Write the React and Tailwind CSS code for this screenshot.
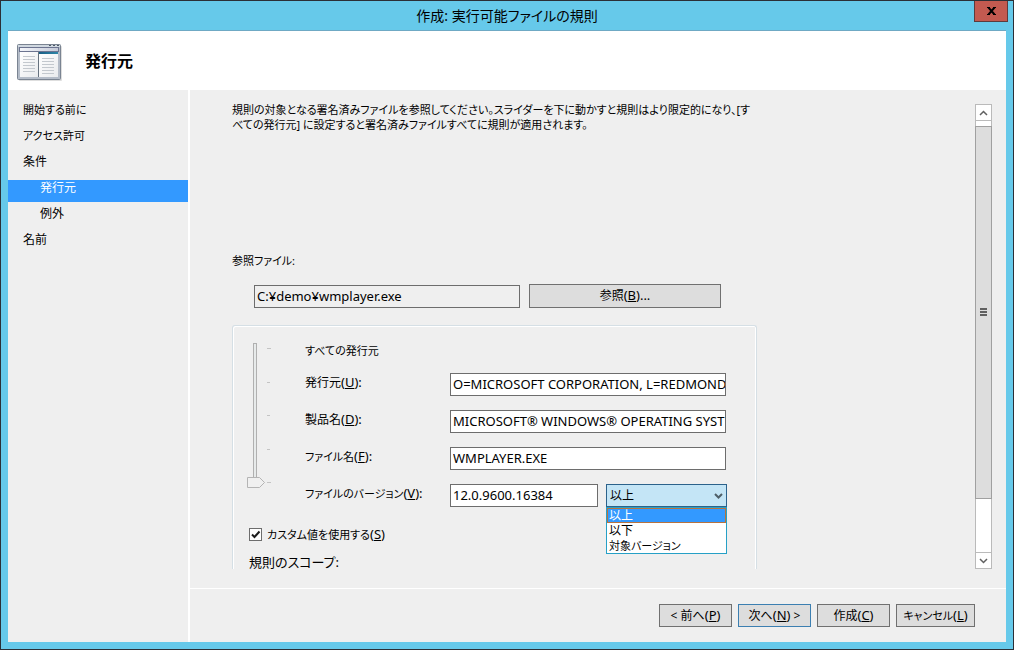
import React, { useState } from "react";

const steps = [
  { label: "開始する前に", compact: true },
  { label: "アクセス許可", compact: true },
  { label: "条件" },
  { label: "発行元", nested: true, current: true },
  { label: "例外", nested: true },
  { label: "名前" },
];

const operators = ["以上", "以下", "対象バージョン"];

const fieldClass =
  "h-[23px] min-w-0 border border-[#6d6d6d] pr-0 pb-[2px] pl-[2px] text-[13px] outline-none";
const buttonClass =
  "h-[23px] border bg-[#dddddd] text-center leading-5 whitespace-nowrap";

function Mnemonic({ letter, suffix = "" }) {
  return (
    <span className="text-[13px]">
      (<u>{letter}</u>){suffix}
    </span>
  );
}

function WizardIcon() {
  return (
    <svg className="mt-[5px]" width="47" height="38" viewBox="0 0 47 38" aria-hidden="true">
      <defs>
        <linearGradient id="titleFade" x1="0" x2="1">
          <stop offset="0" stopColor="#f4f6fb" />
          <stop offset="1" stopColor="#c5cad8" />
        </linearGradient>
        <linearGradient id="pageFade" x1="0" y1="0" x2="1" y2="1">
          <stop offset="0" stopColor="#ffffff" />
          <stop offset="1" stopColor="#e9ebee" />
        </linearGradient>
        <linearGradient id="tealFade" x1="0" x2="1">
          <stop offset="0" stopColor="#1b5f86" />
          <stop offset="1" stopColor="#2d86a8" />
        </linearGradient>
      </defs>
      <rect x="2" y="2" width="43" height="35" rx="1" fill="#dedede" />
      <rect x="0.5" y="0.5" width="43" height="35" rx="1" fill="#b4bcc8" stroke="#7a8492" />
      <rect x="1" y="1" width="42" height="2" fill="#d0d8e0" />
      <path d="M32 1.5h2M36 1.5h2M40 1.5h2" stroke="#4d5866" />
      <rect x="2.5" y="3.5" width="39" height="4" fill="url(#titleFade)" stroke="#6c7490" />
      <rect x="3" y="8" width="18" height="25" fill="url(#pageFade)" />
      <rect x="22" y="8" width="19" height="25" fill="url(#pageFade)" />
      <rect x="21" y="8" width="1" height="25" fill="#66727f" />
      <rect x="22" y="8" width="19" height="2" fill="url(#tealFade)" />
      <path
        d="M6 12.5h12M6 15.5h12M6 18.5h12M6 21.5h12M6 24.5h12M6 27.5h12M25 14.5h12M25 17.5h12M25 20.5h12M25 23.5h12M25 26.5h12M25 29.5h12"
        stroke="#c3c8ce"
      />
    </svg>
  );
}

function PrecisionSlider() {
  const [value, setValue] = useState(0);
  return (
    <div className="relative h-[148px] w-[26px] shrink-0">
      <svg width="26" height="148" viewBox="0 0 26 148" aria-hidden="true">
        <rect x="6.5" y="0.5" width="3" height="143" fill="#e7eaea" stroke="#b0b0b0" />
        <path d="M20 5.5h4M20 39.5h3M20 72.5h3M20 106.5h3M20 139.5h4" stroke="#c4c4c4" />
        <path d="M0.5 134.5h12l5 5l-5 5h-12z" fill="#f0f0f0" stroke="#b4b4b4" />
      </svg>
      <input
        type="range"
        aria-label="規則の範囲"
        min="0"
        max="4"
        value={value}
        onChange={(e) => setValue(Number(e.target.value))}
        className="absolute inset-0 h-full w-full opacity-0 [direction:rtl] [writing-mode:vertical-lr]"
      />
    </div>
  );
}

function ScrollBar() {
  return (
    <div className="mt-[14px] flex w-[17px] shrink-0 flex-col border border-[#bababa] bg-white">
      <button type="button" aria-label="上へスクロール" className="flex h-4 items-center justify-center border-b border-[#bababa]">
        <svg width="9" height="6" viewBox="0 0 9 6" aria-hidden="true">
          <path d="M1 5l3.500-3.500L8 5" fill="none" stroke="#606060" strokeWidth="1.500" />
        </svg>
      </button>
      <div className="flex min-h-0 flex-1 flex-col pt-[5px] pb-[53px]">
        <div className="-mx-px flex flex-1 items-center justify-center border border-[#a0a0a0] bg-[#dddddd]">
          <svg width="7" height="10" viewBox="0 0 7 10" aria-hidden="true">
            <path d="M0 1h7M0 4h7M0 7h7" stroke="#606060" strokeWidth="2" />
          </svg>
        </div>
      </div>
      <button type="button" aria-label="下へスクロール" className="flex h-4 items-center justify-center border-t border-[#bababa]">
        <svg width="9" height="6" viewBox="0 0 9 6" aria-hidden="true">
          <path d="M1 1l3.500 3.500L8 1" fill="none" stroke="#606060" strokeWidth="1.500" />
        </svg>
      </button>
    </div>
  );
}

function TextRow({ id, label, mnemonic, value, compact, children }) {
  return (
    <div className="flex h-[37px] items-start">
      <label
        htmlFor={id}
        className={`w-[145px] shrink-0 leading-[18px] ${compact ? "text-[11px]" : ""}`}
      >
        {label}
        <Mnemonic letter={mnemonic} suffix=":" />
      </label>
      <input
        id={id}
        type="text"
        defaultValue={value}
        className={`${fieldClass} bg-white ${children ? "w-[148px]" : "w-[276px]"}`}
      />
      {children}
    </div>
  );
}

function OperatorSelect() {
  return (
    <div className="relative ml-2 w-[121px]">
      <select
        aria-label="バージョンの条件"
        defaultValue="以上"
        className="block h-[23px] w-full appearance-none border border-[#2c628b] bg-[#c4e5f6] px-[3px] outline-none"
      >
        {operators.map((o) => (
          <option key={o}>{o}</option>
        ))}
      </select>
      <svg className="pointer-events-none absolute top-[9px] right-[4px]" width="9" height="7" viewBox="0 0 9 7" aria-hidden="true">
        <path d="M1 1l3.500 3.500L8 1" fill="none" stroke="#4f5f68" strokeWidth="2" />
      </svg>
      <ul className="absolute top-full left-0 w-full border border-[#26a0c6] bg-white">
        {operators.map((o, i) => (
          <li
            key={o}
            className={`flex h-[15px] items-center leading-none ${
              i === 0
                ? "border border-[#b8733f] bg-[#3399ff] px-px text-white"
                : "px-[2px]"
            } ${o.length > 2 ? "text-[11px]" : ""}`}
          >
            {o}
          </li>
        ))}
      </ul>
    </div>
  );
}

export default function App() {
  return (
    <div className="flex h-screen flex-col border border-[#2b2f36] bg-[#66c9ea] px-[7px] pb-[7px] font-['Noto_Sans','Noto_Sans_CJK_JP',sans-serif] text-[12px] text-black [font-feature-settings:'palt']">
      <header className="relative flex h-[30px] shrink-0 items-center justify-center border-b border-[#6fa9c4]">
        <h1 className="text-[14px] leading-5">作成: 実行可能ファイルの規則</h1>
        <button
          type="button"
          aria-label="閉じる"
          className="absolute top-0 -right-[2px] flex h-[21px] w-[34px] items-center justify-center border border-t-0 border-[#5e3a3c] bg-[#c35a50]"
        >
          <svg width="9" height="8" viewBox="0 0 9 8" aria-hidden="true">
            <path d="M1.500 0.500L7.500 7.500M7.500 0.500L1.500 7.500" stroke="#000" strokeWidth="2" />
            <path d="M0 0.500h3M6 0.500h3M0 7.500h3M6 7.500h3" stroke="#000" />
          </svg>
        </button>
      </header>

      <div className="flex h-[59px] shrink-0 items-center gap-[21px] bg-white pl-[9px]">
        <WizardIcon />
        <h2 className="text-[16px] leading-5 font-bold">発行元</h2>
      </div>

      <div className="flex min-h-0 flex-1 bg-[#efefef]">
        <nav className="w-[180px] shrink-0 pt-3">
          <ul className="flex flex-col gap-1">
            {steps.map((s) => (
              <li key={s.label}>
                <a
                  href="#"
                  aria-current={s.current ? "step" : undefined}
                  className={`block h-[22px] leading-4 ${s.nested ? "pl-8" : "pl-[15px]"} ${
                    s.current ? "bg-[#3399ff] text-white" : ""
                  } ${s.compact ? "text-[11px]" : ""}`}
                >
                  {s.label}
                </a>
              </li>
            ))}
          </ul>
        </nav>

        <main className="flex min-w-0 flex-1 flex-col border-l-2 border-white">
          <div className="mb-[19px] flex min-h-0 flex-1 justify-between pr-[14px] pl-[42px]">
            <div className="flex min-h-0 w-[525px] flex-col pt-3">
              <p className="h-[151px] shrink-0 text-[11px] leading-[15px] whitespace-nowrap">
                規則の対象となる署名済みファイルを参照してください。スライダーを下に動かすと規則はより限定的になり、[す
                <br />
                べての発行元] に設定すると署名済みファイルすべてに規則が適用されます。
              </p>
              <label htmlFor="reference-file" className="text-[11px] leading-4">
                参照ファイル:
              </label>
              <div className="mt-[15px] flex shrink-0 items-end gap-[9px] pl-[22px]">
                <input
                  id="reference-file"
                  type="text"
                  readOnly
                  value="C:¥demo¥wmplayer.exe"
                  className={`${fieldClass} w-[266px]`}
                />
                <button type="button" className="h-6 w-[192px] border border-[#707070] bg-[#dddddd] text-center">
                  参照<Mnemonic letter="B" suffix="..." />
                </button>
              </div>

              <section className="mt-[17px] min-h-0 flex-1 rounded-t-[3px] border border-b-0 border-[#d5dfe5] px-[14px] pt-[17px] shadow-[inset_1px_1px_0_#fff,inset_-1px_0_0_#fff]">
                <div className="flex gap-8">
                  <PrecisionSlider />
                  <div className="flex-1">
                    <p className="h-[30px] text-[11px] leading-4">すべての発行元</p>
                    <TextRow id="publisher" label="発行元" mnemonic="U" value="O=MICROSOFT CORPORATION, L=REDMOND, S=WASHINGTON, C=US" />
                    <TextRow id="product" label="製品名" mnemonic="D" value="MICROSOFT® WINDOWS® OPERATING SYSTEM" />
                    <TextRow id="file" label="ファイル名" mnemonic="F" value="WMPLAYER.EXE" compact />
                    <TextRow id="version" label="ファイルのバージョン" mnemonic="V" value="12.0.9600.16384" compact>
                      <OperatorSelect />
                    </TextRow>
                  </div>
                </div>
                <label className="mt-[3px] flex w-fit items-center gap-[5px] pl-[2px] leading-5">
                  <span className="relative flex size-[13px]">
                    <input type="checkbox" defaultChecked className="peer size-[13px] appearance-none border border-[#6d6d6d] bg-white" />
                    <svg className="pointer-events-none invisible absolute inset-0 peer-checked:visible" width="13" height="13" viewBox="0 0 13 13" aria-hidden="true">
                      <path d="M3 6.500L5.500 9L10.500 3.500" fill="none" stroke="#1c1c1c" strokeWidth="2" />
                    </svg>
                  </span>
                  <span className="text-[11px]">
                    カスタム値を使用する
                    <Mnemonic letter="S" />
                  </span>
                </label>
                <p className="mt-[9px] pl-[2px] text-[13px] leading-4">規則のスコープ:</p>
              </section>
            </div>
            <ScrollBar />
          </div>

          <footer className="flex h-[54px] shrink-0 items-start justify-end gap-[6px] border-t border-white pt-[15px] pr-[31px]">
            <button type="button" className={`${buttonClass} w-[73px] border-[#707070]`}>
              &lt; 前へ<Mnemonic letter="P" />
            </button>
            <button type="button" className={`${buttonClass} w-[73px] border-[#3c7fb1]`}>
              次へ<Mnemonic letter="N" /> &gt;
            </button>
            <button type="button" className={`${buttonClass} w-[73px] border-[#707070]`}>
              作成<Mnemonic letter="C" />
            </button>
            <button type="button" className={`${buttonClass} w-[79px] border-[#707070] text-[11px]`}>
              キャンセル<Mnemonic letter="L" />
            </button>
          </footer>
        </main>
      </div>
    </div>
  );
}
